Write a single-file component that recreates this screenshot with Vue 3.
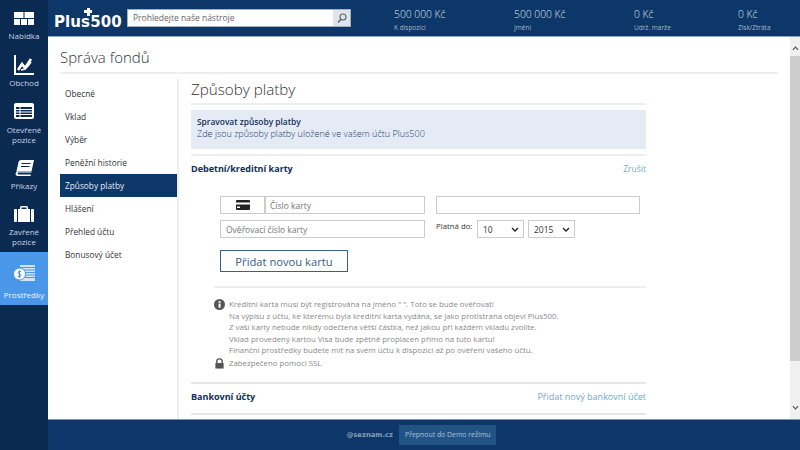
<script setup>
const nav = [
  { id: 'home', label: ['Nabídka'] },
  { id: 'chart', label: ['Obchod'] },
  { id: 'open', label: ['Otevřené', 'pozice'] },
  { id: 'book', label: ['Příkazy'] },
  { id: 'case', label: ['Zavřené', 'pozice'] },
  { id: 'funds', label: ['Prostředky'], active: true },
]
const stats = [
  { value: '500 000 Kč', label: 'K dispozici', w: 120 },
  { value: '500 000 Kč', label: 'Jmění', w: 120 },
  { value: '0 Kč', label: 'Udrž. marže', w: 104 },
  { value: '0 Kč', label: 'Zisk/Ztráta', w: 50 },
]
const menu = ['Obecné', 'Vklad', 'Výběr', 'Peněžní historie', 'Způsoby platby', 'Hlášení', 'Přehled účtu', 'Bonusový účet']
const notes = [
  'Kreditní karta musí být registrována na jméno " ". Toto se bude ověřovat!',
  'Na výpisu z účtu, ke kterému byla kreditní karta vydána, se jako protistrana objeví Plus500.',
  'Z vaší karty nebude nikdy odečtena větší částka, než jakou při každém vkladu zvolíte.',
  'Vklad provedený kartou Visa bude zpětně proplacen přímo na tuto kartu!',
  'Finanční prostředky budete mít na svém účtu k dispozici až po ověření vašeho účtu.',
]
</script>

<template>
  <div class="app">
    <aside class="side">
      <div v-for="n in nav" :key="n.id" class="nav" :class="[n.id, { active: n.active }]">
        <svg class="ico" viewBox="0 0 24 24" width="24" height="24">
          <g v-if="n.id === 'home'" fill="#fff">
            <rect x="2" y="2" width="9.500" height="6" /><rect x="12.500" y="2" width="9.500" height="6" />
            <rect x="2" y="9" width="6" height="6" /><rect x="9" y="9" width="6" height="6" /><rect x="16" y="9" width="6" height="6" />
          </g>
          <g v-else-if="n.id === 'chart'" fill="none" stroke="#fff">
            <path d="M3 2V21H22" stroke-width="2" />
            <path d="M6 17L10 11L13 15L19 6" stroke-width="2.600" />
            <path d="M9 17L13 16L16 13L19 9" stroke-width="1.600" />
          </g>
          <g v-else-if="n.id === 'open'">
            <rect x="2" y="3" width="20" height="16" rx="2" fill="#fff" />
            <rect x="4" y="7" width="16" height="10" fill="#0b2a52" />
            <path d="M4 9.500H20M4 12H20M4 14.500H20M8 7V17" stroke="#fff" stroke-width="1" />
          </g>
          <g v-else-if="n.id === 'book'">
            <path d="M6.500 4Q7 2 9 2H22L19.500 13.500H6Q4.500 13.500 4 15.500L6.500 4Z" fill="#fff" />
            <path d="M3.500 15.500Q3.500 18 6 18H18.500L19 16.500H7Q5.500 16.500 5.500 15.500Q5.500 14.500 7 14.500H19.500L19.300 13.800H6Q4 13.800 3.500 15.500Z" fill="#fff" />
            <path d="M9.500 5.500H18.500M9 8.500H17.500" stroke="#0b2a52" stroke-width="1" />
          </g>
          <g v-else-if="n.id === 'case'" fill="#fff">
            <path d="M8 5V3.500Q8 2 9.500 2H14.500Q16 2 16 3.500V5H14.500V3.500H9.500V5Z" />
            <rect x="2" y="5" width="3" height="13" rx="1" /><rect x="6" y="5" width="12" height="13" /><rect x="19" y="5" width="3" height="13" rx="1" />
          </g>
          <g v-else>
            <rect x="8" y="3" width="15" height="16" fill="#fff" opacity=".75" />
            <path d="M8 5.500H23M8 8H23M8 10.500H23M8 13H23M8 15.500H23" stroke="#4a96e8" stroke-width="1" />
            <circle cx="7.500" cy="12" r="6" fill="#fff" stroke="#4a96e8" stroke-width="1" />
            <path d="M9.300 9.800Q7.500 8.800 6.300 9.800Q5.400 11 7.500 12Q9.700 13 8.700 14.200Q7.500 15.200 5.700 14.200M7.500 8V16" fill="none" stroke="#4a96e8" stroke-width="1" />
          </g>
        </svg>
        <span v-for="l in n.label" :key="l" class="lbl">{{ l }}</span>
      </div>
    </aside>

    <div class="right">
      <header class="top">
        <div class="logo"><span class="plus"></span>Plus500</div>
        <div class="search">
          <span class="ph">Prohledejte naše nástroje</span>
          <span class="sbtn">
            <svg viewBox="0 0 12 12" width="12" height="12"><circle cx="7" cy="5" r="3" fill="none" stroke="#56636f" stroke-width="1.100" /><path d="M5 7.200L2 10.500" stroke="#56636f" stroke-width="1.400" /></svg>
          </span>
        </div>
        <div class="stats">
          <div v-for="s in stats" :key="s.label" class="stat" :style="{ width: s.w + 'px' }">
            <div class="val">{{ s.value }}</div>
            <div class="sub">{{ s.label }}</div>
          </div>
        </div>
      </header>

      <main class="main">
        <div class="page">
          <h1 class="h1">Správa fondů</h1>
          <div class="cols">
            <ul class="menu">
              <li v-for="m in menu" :key="m" :class="{ sel: m === 'Způsoby platby' }">{{ m }}</li>
            </ul>
            <section class="content">
              <h2 class="h2">Způsoby platby</h2>
              <div class="info">
                <strong>Spravovat způsoby platby</strong>
                <span>Zde jsou způsoby platby uložené ve vašem účtu Plus500</span>
              </div>
              <div class="row cards">
                <b>Debetní/kreditní karty</b>
                <a>Zrušit</a>
              </div>
              <div class="form">
                <div class="frow one">
                  <div class="field card">
                    <span class="cardico">
                      <svg viewBox="0 0 14 10" width="14" height="10"><rect width="14" height="10" rx="1" fill="#222" /><rect y="2.500" width="14" height="2" fill="#fff" /><rect x="1" y="6.500" width="3" height="1.500" fill="#fff" /></svg>
                    </span>
                    <span class="ph2">Číslo karty</span>
                  </div>
                  <div class="field name"></div>
                </div>
                <div class="frow two">
                  <div class="field cvv"><span class="ph2">Ověřovací číslo karty</span></div>
                  <span class="exp">Platná do:</span>
                  <div class="sel-box m"><span>10</span><svg viewBox="0 0 8 5" width="8" height="5"><path d="M1 1L4 4L7 1" fill="none" stroke="#222" stroke-width="1.300" /></svg></div>
                  <div class="sel-box y"><span>2015</span><svg viewBox="0 0 8 5" width="8" height="5"><path d="M1 1L4 4L7 1" fill="none" stroke="#222" stroke-width="1.300" /></svg></div>
                </div>
                <button class="add">Přidat novou kartu</button>
              </div>
              <div class="notes">
                <div class="note">
                  <svg viewBox="0 0 12 12" width="11" height="11"><circle cx="6" cy="6" r="6" fill="#555" /><rect x="5" y="5" width="2.200" height="4.500" fill="#fff" /><rect x="5" y="2.300" width="2.200" height="1.800" fill="#fff" /></svg>
                  <div><p v-for="t in notes" :key="t">{{ t }}</p></div>
                </div>
                <div class="note ssl">
                  <svg viewBox="0 0 12 12" width="11" height="11"><path d="M3 6V4Q3 1 6 1Q9 1 9 4V6" fill="none" stroke="#555" stroke-width="1.500" /><rect x="1.500" y="5.500" width="9" height="6" fill="#555" /></svg>
                  <p>Zabezpečeno pomocí SSL</p>
                </div>
              </div>
              <div class="row bank">
                <b>Bankovní účty</b>
                <a>Přidat nový bankovní účet</a>
              </div>
            </section>
          </div>
        </div>
        <div class="scroll">
          <svg viewBox="0 0 8 5" width="7" height="5"><path d="M1 4L4 1L7 4" fill="none" stroke="#555" stroke-width="1.400" /></svg>
          <div class="thumb"></div>
          <svg viewBox="0 0 8 5" width="7" height="5"><path d="M1 1L4 4L7 1" fill="none" stroke="#555" stroke-width="1.400" /></svg>
        </div>
      </main>

      <footer class="foot">
        <span class="mail">@seznam.cz</span>
        <span class="demo">Přepnout do Demo režimu</span>
      </footer>
    </div>
  </div>
</template>

<style>
html, body { margin: 0; }
</style>

<style scoped>
.app { width: 800px; height: 450px; display: flex; overflow: hidden; background: #fff; font-family: "Open Sans", "Liberation Sans", sans-serif; }
.side { width: 48px; flex: none; background: #0b2a52; display: flex; flex-direction: column; padding-top: 10px; box-sizing: border-box; }
.nav { display: flex; flex-direction: column; align-items: center; color: #c8d4e2; font-size: 8px; line-height: 9.500px; flex: none; box-sizing: border-box; }
.ico { flex: none; }
.home { height: 43px; }
.home .ico { margin-bottom: -3px; }
.chart { height: 47px; }
.chart .ico { margin-bottom: 1px; }
.open { height: 58px; }
.open .ico { margin-bottom: 1px; }
.book { height: 46px; }
.book .ico { margin-bottom: -1px; }
.case { height: 48px; }
.case .ico { margin-bottom: -1px; }
.funds { height: 53px; background: #4a96e8; color: #f0f6fd; padding-top: 10px; }
.funds .ico { margin-bottom: 4px; }
.lbl { display: block; white-space: nowrap; }
.right { flex: 1; min-width: 0; display: flex; flex-direction: column; }
.top { height: 37px; flex: none; background: #0c3768; display: flex; align-items: center; color: #fff; box-sizing: border-box; border-bottom: 1px solid #8fa3bb; }
.logo { position: relative; width: 79px; padding-left: 6px; box-sizing: border-box; font: bold 15px/14px "DejaVu Sans", sans-serif; letter-spacing: 0.100px; margin-top: 7px; flex: none; }
.plus { position: absolute; left: 36px; top: -7px; width: 8px; height: 8px; background: linear-gradient(#fff, #fff) center / 8px 3px no-repeat, linear-gradient(#fff, #fff) center / 3px 8px no-repeat; }
.search { width: 224px; height: 18px; flex: none; background: #fff; border: 1px solid #9fb0c2; box-sizing: border-box; display: flex; align-items: center; justify-content: space-between; margin-bottom: 1px; }
.ph { color: #666; font-size: 8.500px; padding-left: 5px; white-space: nowrap; }
.sbtn { width: 17px; height: 16px; background: #dfe4ea; display: flex; align-items: center; justify-content: center; }
.stats { display: flex; margin-left: 43px; margin-top: 2px; }
.stat { flex: none; }
.val { font-size: 10.300px; font-weight: 300; line-height: 14px; color: #dbe2ea; white-space: nowrap; }
.sub { font-size: 6.500px; line-height: 9px; margin-top: 2px; color: #a9b8ca; white-space: nowrap; }
.main { flex: 1; min-height: 0; display: flex; overflow: hidden; }
.page { flex: 1; min-width: 0; padding: 0 12px 0 12px; }
.h1 { margin: 0; height: 35px; font-size: 15px; font-weight: 300; line-height: 41px; color: #333; border-bottom: 2px solid #eee; box-sizing: content-box; }
.cols { display: flex; margin-top: 5px; }
.menu { list-style: none; margin: 0; padding: 3px 0 0; width: 119px; flex: none; border-right: 2px solid #eee; height: 340px; box-sizing: border-box; }
.menu li { height: 23px; line-height: 23px; padding-left: 5px; font-size: 8.300px; color: #333; white-space: nowrap; }
.menu li.sel { background: #0c3768; color: #e8eef5; }
.content { width: 455px; margin-left: 12px; flex: none; }
.h2 { margin: 0; height: 24px; font-size: 15.200px; font-weight: 300; line-height: 20px; color: #333; border-bottom: 2px solid #eee; }
.info { margin-top: 5px; height: 39px; background: #e5ebf5; display: flex; flex-direction: column; padding: 5px 6px 0; box-sizing: border-box; color: #1a3f6e; }
.info strong { font-size: 8.400px; line-height: 13px; font-weight: 600; color: #12305a; }
.info span { font-size: 9.050px; font-weight: 300; line-height: 12px; }
.row { display: flex; justify-content: space-between; align-items: center; }
.row b { font-size: 9px; font-weight: 700; color: #0c2f5c; }
.row a { font-size: 9px; color: #6ea7e6; }
.cards a { font-size: 8.500px; }
.cards { margin-top: 5px; height: 24px; border-top: 2px solid #eee; }
.form { margin: 16px 0 0 29px; }
.frow { display: flex; align-items: flex-start; }
.one { height: 24px; }
.two { height: 30px; }
.field { height: 18px; border: 1.500px solid #ccc; box-sizing: border-box; display: flex; align-items: center; background: #fff; }
.card, .cvv { width: 205px; }
.name { width: 204px; margin-left: 11px; }
.cvv { padding-left: 5px; }
.cardico { width: 45px; height: 100%; border-right: 2px solid #ccc; display: flex; align-items: center; justify-content: center; flex: none; box-sizing: border-box; }
.ph2 { font-size: 8.500px; color: #777; padding-left: 4px; white-space: nowrap; }
.cvv .ph2 { padding-left: 0; }
.exp { font-size: 7.800px; color: #333; margin-left: 11px; width: 41px; line-height: 12px; flex: none; white-space: nowrap; }
.sel-box { height: 18px; border: 1.500px solid #ccc; box-sizing: border-box; display: flex; align-items: center; justify-content: space-between; padding: 0 4px 0 5px; font-size: 8.500px; color: #333; }
.m { width: 47px; }
.y { width: 47px; margin-left: 4px; }
.add { display: block; width: 128px; height: 22px; border: 1px solid #36628f; background: #fff; color: #36628f; font-family: inherit; font-size: 11.200px; padding: 0; }
.notes { margin: 14px 0 0 23px; padding-top: 11px; border-top: 2px solid #eee; height: 83px; }
.note { display: flex; gap: 4px; align-items: flex-start; }
.note p { margin: 0; font-size: 7.830px; line-height: 11.500px; color: #8a8a8a; white-space: nowrap; }
.note svg { flex: none; }
.ssl { margin-top: 1px; }
.bank { border-top: 2px solid #e6e6e6; border-bottom: 2px solid #e6e6e6; height: 25px; padding-bottom: 4px; }
.scroll { width: 10px; flex: none; background: #f0f0f0; display: flex; flex-direction: column; align-items: center; padding: 9px 0 9px; box-sizing: border-box; }
.thumb { width: 10px; height: 305px; margin: 5px 0 auto; background: #cdcdcd; }
.foot { height: 31px; flex: none; background: #0c3768; border-top: 1px solid #7f94ad; box-sizing: border-box; display: flex; align-items: center; justify-content: center; gap: 6px; padding-right: 5px; }
.mail { font: bold 6.800px "DejaVu Sans", sans-serif; color: #8aa0ba; }
.demo { height: 20px; line-height: 20px; padding: 0 6px; background: #215485; color: #a9c0d8; font-size: 6.900px; white-space: nowrap; }
</style>
